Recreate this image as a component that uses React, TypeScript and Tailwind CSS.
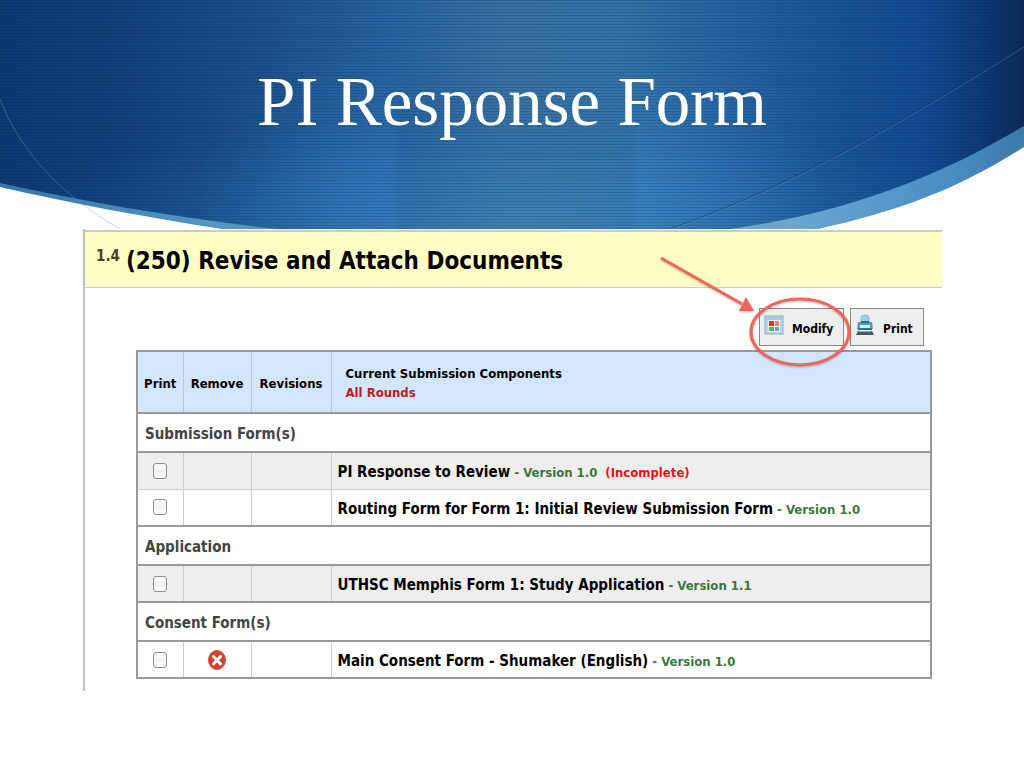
type Item = {
  id: string;
  title: string;
  version: string;
  incomplete?: boolean;
  removable?: boolean;
};

type Section = { name: string; items: Item[] };

const sections: Section[] = [
  {
    name: 'Submission Form(s)',
    items: [
      { id: 'pi-response', title: 'PI Response to Review', version: '1.0', incomplete: true },
      {
        id: 'routing',
        title: 'Routing Form for Form 1: Initial Review Submission Form',
        version: '1.0',
      },
    ],
  },
  {
    name: 'Application',
    items: [{ id: 'application', title: 'UTHSC Memphis Form 1: Study Application', version: '1.1' }],
  },
  {
    name: 'Consent Form(s)',
    items: [
      {
        id: 'consent',
        title: 'Main Consent Form - Shumaker (English)',
        version: '1.0',
        removable: true,
      },
    ],
  },
];

function Banner() {
  return (
    <svg
      className="absolute inset-0 h-full w-full"
      viewBox="0 0 1024 229"
      preserveAspectRatio="none"
      aria-hidden="true"
    >
      <defs>
        <linearGradient id="sky" x1="0" x2="1" y1="0" y2="0">
          <stop offset="0" stopColor="#0c3a72" />
          <stop offset="0.1" stopColor="#103f7c" />
          <stop offset="0.25" stopColor="#1b4f8b" />
          <stop offset="0.38" stopColor="#2862a0" />
          <stop offset="0.5" stopColor="#3871a2" />
          <stop offset="0.6" stopColor="#3472a7" />
          <stop offset="0.7" stopColor="#2864a2" />
          <stop offset="0.83" stopColor="#195292" />
          <stop offset="0.9" stopColor="#134a92" />
          <stop offset="0.95" stopColor="#0e3c7c" />
          <stop offset="1" stopColor="#0a2b58" />
        </linearGradient>
        <linearGradient id="rim" x1="0" x2="1" y1="0" y2="0">
          <stop offset="0" stopColor="#3576a8" />
          <stop offset="0.2" stopColor="#5595c4" />
          <stop offset="0.78" stopColor="#6ba5d0" />
          <stop offset="0.92" stopColor="#4a8fc5" />
          <stop offset="1" stopColor="#3c7ba8" />
        </linearGradient>
        <radialGradient id="glow" cx="0.5" cy="1" r="0.5">
          <stop offset="0" stopColor="#4aa0d8" stopOpacity="0.35" />
          <stop offset="0.5" stopColor="#3a90d0" stopOpacity="0.22" />
          <stop offset="1" stopColor="#2a70c0" stopOpacity="0" />
        </radialGradient>
        <linearGradient id="shadeLeft" x1="0" x2="1" y1="0" y2="0">
          <stop offset="0" stopColor="#3d94d8" stopOpacity="0" />
          <stop offset="0.7" stopColor="#3d94d8" stopOpacity="0.25" />
          <stop offset="0.95" stopColor="#3d94d8" stopOpacity="0.25" />
          <stop offset="1" stopColor="#3d94d8" stopOpacity="0" />
        </linearGradient>
        <linearGradient id="shadeRight" x1="0" x2="1" y1="0" y2="0">
          <stop offset="0" stopColor="#3d94d8" stopOpacity="0" />
          <stop offset="0.08" stopColor="#3d94d8" stopOpacity="0.3" />
          <stop offset="1" stopColor="#3d94d8" stopOpacity="0" />
        </linearGradient>
        <linearGradient id="fade" x1="0" x2="0" y1="0" y2="1">
          <stop offset="0.2" stopColor="#000" />
          <stop offset="0.8" stopColor="#fff" />
        </linearGradient>
        <mask id="lower">
          <rect width="1024" height="229" fill="url(#fade)" />
        </mask>
        <pattern id="lines" width="3" height="3" patternUnits="userSpaceOnUse">
          <rect width="3" height="1" fill="#04213f" fillOpacity="0.18" />
        </pattern>
        <clipPath id="dome">
          <path d="M0 0H1024V126C940 176 850 212 730 229H278C180 218 90 203 0 183Z" />
        </clipPath>
      </defs>
      <path d="M0 0H1024V147C960 188 900 211 818 229H222C150 218 70 203 0 187Z" fill="url(#rim)" />
      <g clipPath="url(#dome)">
        <rect width="1024" height="229" fill="url(#sky)" />
        <rect width="1024" height="229" fill="url(#glow)" />
        <g mask="url(#lower)">
          <rect x="200" width="202" height="229" fill="url(#shadeLeft)" />
          <rect x="625" width="200" height="229" fill="url(#shadeRight)" />
        </g>
        <rect width="1024" height="229" fill="url(#lines)" />
      </g>
      <g fill="none">
        <path d="M0 99C18 147 58 194 120 229" stroke="#8298b0" strokeOpacity="0.4" />
        <path d="M672 229C800 184 910 118 1024 47" stroke="#5f9ac8" strokeOpacity="0.4" />
        <path d="M672 228C800 183 910 117 1024 46" stroke="#0b3158" strokeOpacity="0.5" />
      </g>
    </svg>
  );
}

function ModifyIcon() {
  return (
    <svg className="h-5 w-5" viewBox="0 0 20 20" aria-hidden="true">
      <rect x="1" y="1" width="18" height="18" fill="#b4d8ea" stroke="#86afc5" />
      <path d="M2 2h16v3H2z" fill="#a3cde3" />
      <rect x="4" y="5" width="12" height="12" fill="#eef7fc" />
      <rect x="5" y="6" width="5" height="5" fill="#d6352b" />
      <rect x="11" y="6" width="4" height="5" fill="#f0854f" />
      <rect x="5" y="12" width="5" height="4" fill="#58b947" />
      <rect x="11" y="12" width="4" height="4" fill="#7b93e4" />
    </svg>
  );
}

function PrintIcon() {
  return (
    <svg className="h-[22px] w-5" viewBox="0 0 20 22" aria-hidden="true">
      <path d="M6 8V3q0-2 4-2t4 2v5z" fill="#a3cfdf" stroke="#8fbfd2" />
      <path d="M3 8h14l1 7H2z" fill="#4c9cc4" />
      <path d="M6 7h8v2H6z" fill="#256b98" />
      <path d="M5 11h10v3H5z" fill="#d5ecf6" />
      <path d="M3 14h14v2H3z" fill="#2a719f" />
      <path d="M3 17h14l2 4H1z" fill="#4c5862" />
      <path d="M4 17h12v1H4z" fill="#98a5ad" />
    </svg>
  );
}

function RemoveIcon() {
  return (
    <svg className="h-5 w-[18px]" viewBox="0 0 18 20" aria-hidden="true">
      <ellipse cx="9" cy="10" rx="8.5" ry="9.5" fill="#d8412f" stroke="#c5564c" />
      <path d="M5.5 6.5l7 7.5M12.5 6.5l-7 7.5" stroke="#fff" strokeWidth="3" strokeLinecap="round" />
    </svg>
  );
}

// Arrow and ring drawn over the Modify button
function Callout() {
  return (
    <svg
      className="pointer-events-none absolute -top-14 -left-[103px] h-32 w-50"
      viewBox="0 0 200 128"
      fill="none"
      aria-hidden="true"
    >
      <g style={{ filter: 'drop-shadow(0 1px 1px #0004)' }} stroke="#f4645a" strokeWidth="3">
        <path d="M5 6L86 52" />
        <path d="M98 59L90 45L83 59Z" fill="#f4645a" stroke="none" />
        <ellipse cx="144" cy="80" rx="49" ry="33" />
      </g>
    </svg>
  );
}

function ComponentRow({ item, shaded }: { item: Item; shaded: boolean }) {
  return (
    <tr className={shaded ? 'h-[37px] bg-[#eeeeee]' : 'h-[37px] bg-white'}>
      <td className="border border-[#cccccc] text-center">
        <input
          id={item.id}
          type="checkbox"
          className="mx-auto block h-4 w-3.5 appearance-none rounded-[3px] border border-[#8c8c8c] bg-linear-to-b from-white via-[#f2f2f2] to-white checked:bg-[#4a90d9]"
        />
      </td>
      <td className="border border-[#cccccc]">
        {item.removable && (
          <button type="button" aria-label="Remove" className="mx-auto block">
            <RemoveIcon />
          </button>
        )}
      </td>
      <td className="border border-[#cccccc]" />
      <td className="border border-[#cccccc] pt-1 pl-1.5 text-[13px] leading-5 text-[#3b773b]">
        <label htmlFor={item.id} className="text-[15px] text-black">
          {item.title}
        </label>{' '}
        - Version {item.version}
        {item.incomplete && <span className="ml-2 text-[#ee1111]">(Incomplete)</span>}
      </td>
    </tr>
  );
}

export default function App() {
  return (
    <main className="min-h-screen bg-white font-['DejaVu_Sans_Condensed','DejaVu_Sans',sans-serif] font-bold text-black">
      <header className="relative h-[229px]">
        <Banner />
        <h1 className="relative pt-[62px] text-center font-['Liberation_Serif',serif] text-[69px] leading-20 font-normal text-white">
          PI Response Form
        </h1>
      </header>

      <div className="pr-[82px] pl-[83px]">
        <section className="border-l-2 border-[#b8bfcb] pt-px pb-3">
          <div className="flex h-[58px] items-center border-t-2 border-b border-t-[#c5cccf] border-b-[#cccccc] bg-[#ffffc6] pl-[11px]">
            <span className="self-start pt-3 text-[15px] leading-6 text-[#444422]">1.4</span>
            <h2 className="ml-1.5 pt-0.5 text-2xl leading-8">(250) Revise and Attach Documents</h2>
          </div>

          <div className="pt-5 pr-2.5 pl-[51px]">
            <div className="mb-1 flex justify-end gap-1.5 pr-2 text-xs">
              <div className="relative">
                <button
                  type="button"
                  className="flex h-[38px] w-[85px] items-center border border-[#888888] bg-[#eeeeee] pl-1"
                >
                  <span className="mb-1">
                    <ModifyIcon />
                  </span>
                  <span className="pt-1 pl-2">Modify</span>
                </button>
                <Callout />
              </div>
              <button
                type="button"
                className="flex h-[38px] w-[74px] items-center border border-[#888888] bg-[#eeeeee] pl-1"
              >
                <span className="mb-1">
                  <PrintIcon />
                </span>
                <span className="pt-1 pl-2">Print</span>
              </button>
            </div>

            <table className="w-full table-fixed border-collapse border-2 border-[#999999]">
              <colgroup>
                <col className="w-[46px]" />
                <col className="w-[68px]" />
                <col className="w-[80px]" />
                <col />
              </colgroup>
              <thead>
                <tr className="h-[62px] bg-[#d2e7ff] text-[13px] leading-[19px]">
                  <th className="border-r border-[#bcc8d4] pt-0.5">Print</th>
                  <th className="border-r border-[#bcc8d4] pt-0.5">Remove</th>
                  <th className="border-r border-[#bcc8d4] pt-0.5">Revisions</th>
                  <th className="pt-0.5 pl-3.5 text-left">
                    Current Submission Components
                    <br />
                    <a href="#rounds" className="text-[#bf1b22]">
                      All Rounds
                    </a>
                  </th>
                </tr>
              </thead>
              {sections.map((section) => (
                <tbody key={section.name}>
                  <tr className="h-[39px] border-y-2 border-[#999999]">
                    <th
                      colSpan={4}
                      className="pt-0.5 pl-[7px] text-left text-[15px] leading-5 text-[#444444]"
                    >
                      {section.name}
                    </th>
                  </tr>
                  {section.items.map((item, i) => (
                    <ComponentRow
                      key={item.id}
                      item={item}
                      shaded={i % 2 === 0 && !item.removable}
                    />
                  ))}
                </tbody>
              ))}
            </table>
          </div>
        </section>
      </div>
    </main>
  );
}
